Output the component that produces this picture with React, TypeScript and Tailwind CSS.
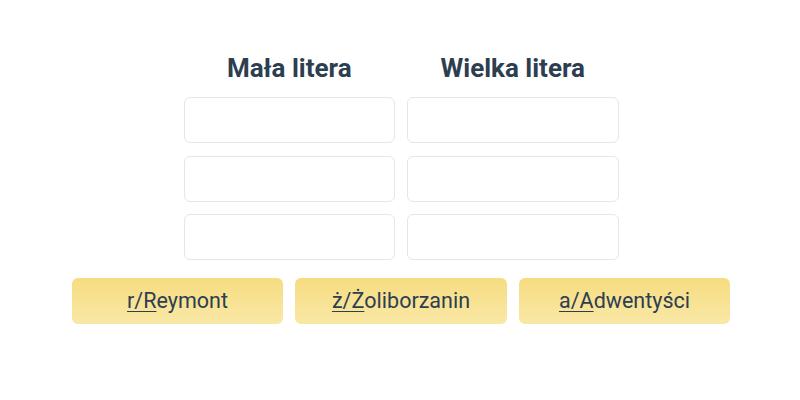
export default function App() {
  const buttons = [
    { u: "r/R", rest: "eymont" },
    { u: "ż/Ż", rest: "oliborzanin" },
    { u: "a/A", rest: "dwentyści" },
  ]
  return (
    <div className="flex h-[400px] w-[800px] flex-col items-center bg-white pl-[2px] pt-[52px] font-['Roboto',sans-serif] text-[#2c3e50]">
      <div className="grid grid-cols-[211.5px_211.5px] gap-x-3 gap-y-[12.5px]">
        <h2 className="mb-[0.5px] text-center text-[26px] font-bold leading-8">Mała litera</h2>
        <h2 className="mb-[0.5px] text-center text-[26px] font-bold leading-8">Wielka litera</h2>
        {Array.from({ length: 6 }).map((_, i) => (
          <input
            key={i}
            type="text"
            className="h-[46px] rounded-md border border-[#e3e6ea] bg-white px-3 text-lg outline-none"
          />
        ))}
      </div>
      <div className="mt-[18px] flex gap-3">
        {buttons.map((b) => (
          <button
            key={b.u}
            className="flex h-[46px] w-[211.5px] items-center justify-center rounded-md bg-gradient-to-b from-[#f7dc80] to-[#f9e8a5] text-[21.5px] text-[#2c3e50]"
          >
            <span className="underline decoration-1 underline-offset-[3px]">{b.u}</span>
            {b.rest}
          </button>
        ))}
      </div>
    </div>
  )
}
